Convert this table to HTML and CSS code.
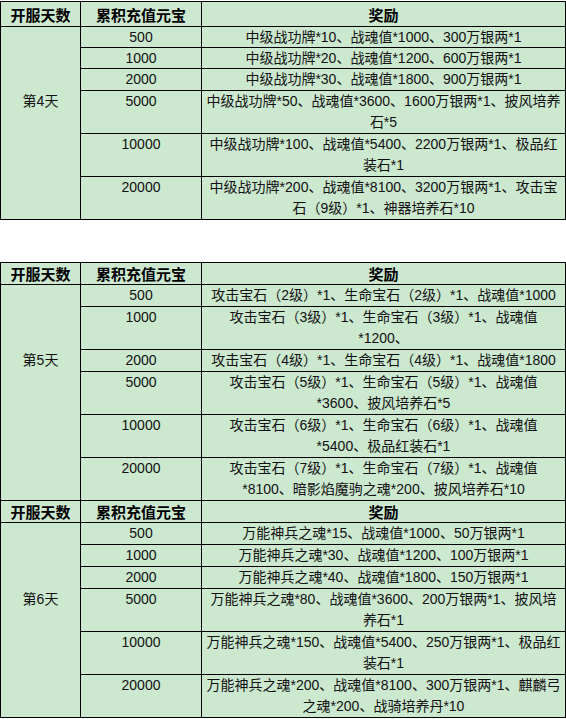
FILE: index.html
```html
<!DOCTYPE html>
<html lang="zh-CN">
<head>
<meta charset="utf-8">
<title>开服累积充值奖励</title>
<link rel="stylesheet" href="styles.css">
</head>
<body>
<table class="grid grid-first">
  <colgroup><col class="c-day"><col class="c-amt"><col class="c-rew"></colgroup>
  <tr class="head head-tall"><th>开服天数</th><th>累积充值元宝</th><th>奖励</th></tr>
  <tr class="short"><td rowspan="6" class="day day-4">第4天</td><td>500</td><td>中级战功牌*10、战魂值*1000、300万银两*1</td></tr>
  <tr class="short"><td>1000</td><td>中级战功牌*20、战魂值*1200、600万银两*1</td></tr>
  <tr><td>2000</td><td>中级战功牌*30、战魂值*1800、900万银两*1</td></tr>
  <tr><td>5000</td><td>中级战功牌*50、战魂值*3600、1600万银两*1、披风培养<br>石*5</td></tr>
  <tr><td>10000</td><td>中级战功牌*100、战魂值*5400、2200万银两*1、极品红<br>装石*1</td></tr>
  <tr><td>20000</td><td>中级战功牌*200、战魂值*8100、3200万银两*1、攻击宝<br>石（9级）*1、神器培养石*10</td></tr>
</table>

<table class="grid grid-second">
  <colgroup><col class="c-day"><col class="c-amt"><col class="c-rew"></colgroup>
  <tr class="head"><th>开服天数</th><th>累积充值元宝</th><th>奖励</th></tr>
  <tr><td rowspan="6" class="day day-5">第5天</td><td>500</td><td>攻击宝石（2级）*1、生命宝石（2级）*1、战魂值*1000</td></tr>
  <tr><td>1000</td><td>攻击宝石（3级）*1、生命宝石（3级）*1、战魂值<br>*1200、</td></tr>
  <tr><td>2000</td><td>攻击宝石（4级）*1、生命宝石（4级）*1、战魂值*1800</td></tr>
  <tr><td>5000</td><td>攻击宝石（5级）*1、生命宝石（5级）*1、战魂值<br>*3600、披风培养石*5</td></tr>
  <tr><td>10000</td><td>攻击宝石（6级）*1、生命宝石（6级）*1、战魂值<br>*5400、极品红装石*1</td></tr>
  <tr><td>20000</td><td>攻击宝石（7级）*1、生命宝石（7级）*1、战魂值<br>*8100、暗影焰魔驹之魂*200、披风培养石*10</td></tr>
  <tr class="head"><th>开服天数</th><th>累积充值元宝</th><th>奖励</th></tr>
  <tr><td rowspan="6" class="day day-6">第6天</td><td>500</td><td>万能神兵之魂*15、战魂值*1000、50万银两*1</td></tr>
  <tr><td>1000</td><td>万能神兵之魂*30、战魂值*1200、100万银两*1</td></tr>
  <tr><td>2000</td><td>万能神兵之魂*40、战魂值*1800、150万银两*1</td></tr>
  <tr><td>5000</td><td>万能神兵之魂*80、战魂值*3600、200万银两*1、披风培<br>养石*1</td></tr>
  <tr><td>10000</td><td>万能神兵之魂*150、战魂值*5400、250万银两*1、极品红<br>装石*1</td></tr>
  <tr><td>20000</td><td>万能神兵之魂*200、战魂值*8100、300万银两*1、麒麟弓<br>之魂*200、战骑培养丹*10</td></tr>
</table>
</body>
</html>
```
FILE: styles.css
```css
html, body {
  margin: 0;
  padding: 0;
  background: #ffffff;
}

body {
  font-family: "Liberation Sans", "Noto Sans CJK SC", sans-serif;
  font-size: 14px;
  color: #111;
}

.grid {
  border-collapse: collapse;
  table-layout: fixed;
  width: 566px;
  background: #cce8cf;
}

.grid-first {
  margin-top: 1px;
}

.grid-second {
  margin-top: 42px;
}

.c-day { width: 80px; }
.c-amt { width: 121px; }

.grid td,
.grid th {
  border: 1px solid #000;
  padding: 0;
  text-align: center;
  vertical-align: top;
  line-height: 21px;
  white-space: nowrap;
}

.grid th {
  font-family: "Noto Sans CJK SC", sans-serif;
  font-size: 15px;
  font-weight: bold;
  color: #000;
  vertical-align: middle;
}

.head-tall th {
  height: 24px;
}

.short td {
  line-height: 20px;
}

.grid td.day {
  line-height: 21px;
}

.grid td.day-4 { padding-top: 64px; }
.grid td.day-5 { padding-top: 65px; }
.grid td.day-6 { padding-top: 66px; }
```
